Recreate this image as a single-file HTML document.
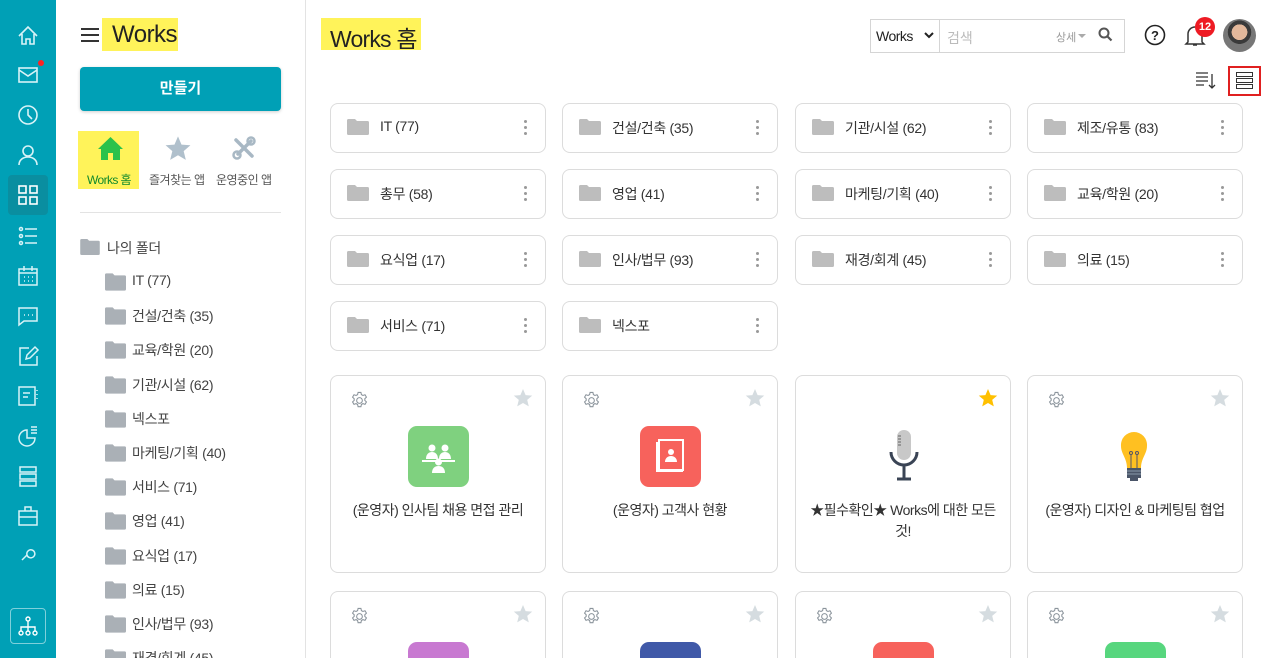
<!DOCTYPE html><html><head><meta charset="utf-8"><style>
*{box-sizing:border-box;margin:0;padding:0}
html,body{width:1282px;height:658px;overflow:hidden}
body{background:#fff;font-family:"Liberation Sans","Noto Sans CJK KR",sans-serif;color:#333;position:relative}
#wrap{position:absolute;left:0;top:0;width:1282px;height:658px;overflow:hidden}
.a{position:absolute}
.rail{left:0;top:0;width:56px;height:658px;background:#00a0b6}
.ri{position:absolute;left:16px;width:24px;height:24px}
.side{left:56px;top:0;width:250px;height:658px;border-right:1px solid #e3e3e3}
.ft{position:absolute;font-size:14px;color:#444;white-space:nowrap;letter-spacing:-.3px}
.fc{position:absolute;width:216px;height:50px;border:1px solid #dcdcdc;border-radius:8px;background:#fff}
.fc .fi{position:absolute;left:16px;top:15px}
.fc span{position:absolute;left:49px;top:14px;font-size:14px;color:#333;letter-spacing:-.3px}
.fc .d{position:absolute;right:18px;top:16px;width:3px}
.fc .d i{display:block;width:3px;height:3px;background:#999;border-radius:50%;margin-bottom:3px}
.ac{position:absolute;width:216px;height:198px;border:1px solid #dcdcdc;border-radius:8px;background:#fff;overflow:hidden}
.ac .g{position:absolute;left:19px;top:15px}
.ac .s{position:absolute;right:12px;top:12px}
.ac .ic{position:absolute;left:77px;top:50px;width:61px;height:61px;border-radius:9px}
.ac .t{position:absolute;left:8px;right:8px;top:124px;text-align:center;font-size:14px;line-height:21px;color:#333;letter-spacing:-.5px}
</style></head><body><div id="wrap">
<svg width="0" height="0" style="position:absolute"><defs>
<symbol id="fold" viewBox="0 0 22 16"><path d="M0 1.5Q0 0 1.5 0H8l2 2h10.5Q22 2 22 3.5V14.5Q22 16 20.5 16H1.5Q0 16 0 14.5Z" fill="#bdbdbd"/></symbol>
<symbol id="foldb" viewBox="0 0 22 18"><path d="M0 1.5Q0 0 1.5 0H8l2 2h10.5Q22 2 22 3.5V16.5Q22 18 20.5 18H1.5Q0 18 0 16.5Z" fill="#aab0b6"/></symbol>
<symbol id="gear" viewBox="0 0 20 20"><g fill="none" stroke="#8a939b" stroke-width="1.1"><circle cx="10" cy="10" r="3"/><path d="M8.5 1.5h3l.5 2.3 1.6.9 2.2-.8 1.5 2.6-1.7 1.6v1.8l1.7 1.6-1.5 2.6-2.2-.8-1.6.9-.5 2.3h-3l-.5-2.3-1.6-.9-2.2.8-1.5-2.6 1.7-1.6V8.1L2.7 6.5l1.5-2.6 2.2.8 1.6-.9z"/></g></symbol>
<symbol id="star" viewBox="0 0 20 20"><path d="M10 1l2.6 6.1 6.6.5-5 4.3 1.6 6.5L10 15l-5.8 3.4 1.6-6.5-5-4.3 6.6-.5z"/></symbol>
</defs></svg>

<div class="a rail">
<svg class="ri" style="top:24px" viewBox="0 0 24 24" fill="none" stroke="#d8f3f7" stroke-width="1.6"><path d="M3 12L12 3l9 9M6 10v10h4v-5h4v5h4V10"/></svg>
<svg class="ri" style="top:63px" viewBox="0 0 24 24" fill="none" stroke="#d8f3f7" stroke-width="1.6"><rect x="3" y="5" width="18" height="14"/><path d="M3 7l9 6 9-6"/></svg>
<div class="a" style="left:38px;top:60px;width:6px;height:6px;border-radius:50%;background:#f22"></div>
<svg class="ri" style="top:103px" viewBox="0 0 24 24" fill="none" stroke="#d8f3f7" stroke-width="1.6"><circle cx="12" cy="12" r="9"/><path d="M12 6v6l4 4"/></svg>
<svg class="ri" style="top:143px" viewBox="0 0 24 24" fill="none" stroke="#d8f3f7" stroke-width="1.6"><circle cx="12" cy="8" r="5"/><path d="M3 22c0-5 4-8 9-8s9 3 9 8"/></svg>
<div class="a" style="left:8px;top:175px;width:40px;height:40px;background:#0a8ea0;border-radius:4px"></div>
<svg class="ri" style="top:183px" viewBox="0 0 24 24" fill="none" stroke="#fff" stroke-width="1.6"><rect x="3" y="3" width="7" height="7"/><rect x="14" y="3" width="7" height="7"/><rect x="3" y="14" width="7" height="7"/><rect x="14" y="14" width="7" height="7"/></svg>
<svg class="ri" style="top:224px" viewBox="0 0 24 24" fill="none" stroke="#d8f3f7" stroke-width="1.5"><circle cx="5" cy="5" r="1.5"/><circle cx="5" cy="12" r="1.5"/><circle cx="5" cy="19" r="1.5"/><path d="M9 5h12M9 12h12M9 19h12"/></svg>
<svg class="ri" style="top:264px" viewBox="0 0 24 24" fill="none" stroke="#d8f3f7" stroke-width="1.5"><rect x="3" y="5" width="18" height="16"/><path d="M8 2v5M16 2v5M3 9h18M8 13h1M12 13h1M16 13h1M8 17h1M12 17h1M16 17h1"/></svg>
<svg class="ri" style="top:304px" viewBox="0 0 24 24" fill="none" stroke="#d8f3f7" stroke-width="1.5"><path d="M3 4h18v13H8l-5 4z"/><path d="M8 11h1M12 11h1M16 11h1"/></svg>
<svg class="ri" style="top:344px" viewBox="0 0 24 24" fill="none" stroke="#d8f3f7" stroke-width="1.5"><path d="M13 4H4v17h17v-9"/><path d="M10 15l1-4 8-8 3 3-8 8z"/></svg>
<svg class="ri" style="top:384px" viewBox="0 0 24 24" fill="none" stroke="#d8f3f7" stroke-width="1.5"><rect x="3" y="3" width="16" height="18"/><path d="M7 9h7M7 13h5M21 6v1M21 10v1M21 14v1"/></svg>
<svg class="ri" style="top:424px" viewBox="0 0 24 24" fill="none" stroke="#d8f3f7" stroke-width="1.5"><path d="M11 6a8 8 0 1 0 8 8h-8z"/><path d="M15 3h6M15 6h6M15 9h6"/></svg>
<svg class="ri" style="top:464px" viewBox="0 0 24 24" fill="none" stroke="#d8f3f7" stroke-width="1.5"><rect x="4" y="3" width="16" height="5"/><rect x="4" y="10" width="16" height="5"/><rect x="4" y="17" width="16" height="5"/></svg>
<svg class="ri" style="top:504px" viewBox="0 0 24 24" fill="none" stroke="#d8f3f7" stroke-width="1.5"><rect x="3" y="7" width="18" height="14"/><path d="M9 7V3h6v4M3 13h18"/></svg>
<svg class="ri" style="top:542px" viewBox="0 0 24 24" fill="none" stroke="#d8f3f7" stroke-width="1.5"><path d="M6 18l5-5M11 13a4 4 0 1 0 5-5 4 4 0 0 0-5 5z"/></svg>
<div class="a" style="left:10px;top:608px;width:36px;height:36px;border:1px solid #7fd0db;border-radius:4px"></div>
<svg class="ri" style="top:614px" viewBox="0 0 24 24" fill="none" stroke="#fff" stroke-width="1.4"><circle cx="12" cy="5" r="2"/><circle cx="5" cy="19" r="2"/><circle cx="12" cy="19" r="2"/><circle cx="19" cy="19" r="2"/><path d="M12 7v10M5 17v-4h14v4"/></svg>
</div>

<div class="a side">
<div class="a" style="left:25px;top:28px;width:18px;height:2px;background:#333;box-shadow:0 6px 0 #333,0 12px 0 #333"></div>
<div class="a" style="left:46px;top:18px;width:76px;height:33px;background:#fff35a"></div>
<div class="a" style="left:56px;top:21px;font-size:24px;color:#222;letter-spacing:-.5px">Works</div>
<div class="a" style="left:24px;top:67px;width:201px;height:44px;background:#00a0b6;border-radius:4px;box-shadow:0 1px 3px rgba(0,0,0,.2);color:#fff;font-size:15px;font-weight:bold;text-align:center;line-height:44px">만들기</div>
<div class="a" style="left:22px;top:131px;width:61px;height:58px;background:#fff35a"></div>
<svg class="a" style="left:41px;top:136px" width="27" height="25" viewBox="0 0 27 25"><path d="M13.5 1L1 13h3v11h7v-7h5v7h7V13h3z" fill="#2bc24b"/></svg>
<div class="a" style="left:31px;top:171px;font-size:12px;color:#118a2c;letter-spacing:-.6px">Works 홈</div>
<svg class="a" style="left:108px;top:135px" width="28" height="27"><use href="#star" fill="#b0c0cc" width="28" height="27"/></svg>
<div class="a" style="left:93px;top:171px;font-size:12px;color:#555;letter-spacing:-.5px">즐겨찾는 앱</div>
<svg class="a" style="left:175px;top:135px" width="26" height="26" viewBox="0 0 26 26" fill="none" stroke="#a8b8c4" stroke-linecap="round"><path d="M5 5l16 16" stroke-width="3.5"/><path d="M20 6L7 19" stroke-width="3.5"/><circle cx="20" cy="6" r="3.5" stroke-width="2.5"/><circle cx="6" cy="20" r="3.5" stroke-width="2.5"/></svg>
<div class="a" style="left:160px;top:171px;font-size:12px;color:#555;letter-spacing:-.5px">운영중인 앱</div>
<div class="a" style="left:24px;top:212px;width:201px;height:1px;background:#e3e3e3"></div>
<svg class="a" style="left:24px;top:239px" width="20" height="16"><use href="#foldb" width="20" height="16"/></svg>
<div class="ft" style="left:51px;top:238px">나의 폴더</div>
</div>
<div id="tree"></div>

<div class="a" style="left:321px;top:18px;width:100px;height:32px;background:#fff35a"></div>
<div class="a" style="left:330px;top:20px;font-size:23px;color:#222;letter-spacing:-.8px">Works 홈</div>

<div class="a" style="left:870px;top:19px;width:255px;height:34px;border:1px solid #d5d5d5"></div>
<div class="a" style="left:939px;top:20px;width:1px;height:32px;background:#d5d5d5"></div>
<div class="a" style="left:876px;top:28px;font-size:14px;color:#222;letter-spacing:-.5px">Works</div>
<svg class="a" style="left:924px;top:31px" width="10" height="8" viewBox="0 0 10 8"><path d="M1 2l4 4 4-4" stroke="#222" stroke-width="2" fill="none"/></svg>
<div class="a" style="left:947px;top:28px;font-size:14px;color:#bbb">검색</div>
<div class="a" style="left:1056px;top:29px;font-size:11px;color:#999">상세</div>
<div class="a" style="left:1078px;top:34px;border:4px solid transparent;border-top-color:#aaa"></div>
<svg class="a" style="left:1098px;top:27px" width="15" height="15" viewBox="0 0 15 15"><circle cx="6" cy="6" r="4.5" stroke="#555" stroke-width="2" fill="none"/><path d="M9.5 9.5l4 4" stroke="#555" stroke-width="2.2"/></svg>
<svg class="a" style="left:1144px;top:24px" width="22" height="22" viewBox="0 0 22 22"><circle cx="11" cy="11" r="9.5" stroke="#222" stroke-width="1.6" fill="none"/><text x="11" y="16" font-size="13" font-weight="bold" text-anchor="middle" fill="#222" font-family="Liberation Sans">?</text></svg>
<svg class="a" style="left:1184px;top:24px" width="22" height="24" viewBox="0 0 22 24"><path d="M4 18V10a7 7 0 0 1 14 0v8l2 2H2z M9 21h4" stroke="#333" stroke-width="1.5" fill="none"/></svg>
<div class="a" style="left:1195px;top:17px;width:20px;height:20px;border-radius:50%;background:#ee1b24;color:#fff;font-size:11px;font-weight:bold;text-align:center;line-height:20px">12</div>
<div class="a" style="left:1223px;top:19px;width:33px;height:33px;border-radius:50%;background:radial-gradient(circle at 50% 40%,#e3b89b 0 30%,#3a3a3a 31% 45%,#777 46%)"></div>
<svg class="a" style="left:1195px;top:70px" width="22" height="20" viewBox="0 0 22 20" stroke="#333" stroke-width="1.3" fill="none"><path d="M1 3h12M1 7h12M1 11h12M1 15h8M17 4v14M14 15l3 3 3-3"/></svg>
<div class="a" style="left:1228px;top:66px;width:33px;height:30px;border:2px solid #e02020"></div>
<div class="a" style="left:1236px;top:72px;width:17px;height:5px;border:1.3px solid #333"></div>
<div class="a" style="left:1236px;top:78px;width:17px;height:5px;border:1.3px solid #333"></div>
<div class="a" style="left:1236px;top:84px;width:17px;height:5px;border:1.3px solid #333"></div>

<div id="main"></div>
</div>
<script>
var tr=["IT (77)","건설/건축 (35)","교육/학원 (20)","기관/시설 (62)","넥스포","마케팅/기획 (40)","서비스 (71)","영업 (41)","요식업 (17)","의료 (15)","인사/법무 (93)","재경/회계 (45)"];
var h="";tr.forEach(function(t,i){var y=273+i*34.2;h+='<svg class="a" style="left:105px;top:'+y+'px" width="21" height="18"><use href="#foldb" width="21" height="18"/></svg><div class="ft" style="left:132px;top:'+(y-1)+'px;'+(i==11?'height:'+(658-y+1)+'px;overflow:hidden':'')+'">'+t+'</div>';});
document.getElementById("tree").innerHTML=h;
var f=[["IT (77)","건설/건축 (35)","기관/시설 (62)","제조/유통 (83)"],["총무 (58)","영업 (41)","마케팅/기획 (40)","교육/학원 (20)"],["요식업 (17)","인사/법무 (93)","재경/회계 (45)","의료 (15)"],["서비스 (71)","넥스포"]];
var X=[330,562,795,1027];h="";
f.forEach(function(r,ri){r.forEach(function(t,ci){h+='<div class="fc" style="left:'+X[ci]+'px;top:'+(103+ri*66)+'px"><svg class="fi" width="22" height="16"><use href="#fold" width="22" height="16"/></svg><span>'+t+'</span><div class="d"><i></i><i></i><i></i></div></div>';});});
var ic=[
'<div class="ic" style="background:#7fd17f"><svg width="61" height="61" viewBox="0 0 61 61" fill="#fff"><circle cx="24" cy="22" r="3.5"/><circle cx="37" cy="22" r="3.5"/><path d="M18 33c0-5 3-7 6-7s6 2 6 7zM31 33c0-5 3-7 6-7s6 2 6 7z"/><rect x="14" y="34" width="33" height="2"/><circle cx="30.5" cy="36" r="3.5"/><path d="M24 47c0-5 3-7 6.5-7s6.5 2 6.5 7z"/></svg></div>',
'<div class="ic" style="background:#f7625c"><svg width="61" height="61" viewBox="0 0 61 61"><rect x="16" y="16" width="27" height="30" fill="#fff"/><rect x="19" y="14" width="24" height="30" fill="#f7625c" stroke="#fff" stroke-width="2"/><circle cx="31" cy="26" r="3" fill="#fff"/><path d="M25 36c0-4 3-6 6-6s6 2 6 6z" fill="#fff"/></svg></div>',
'<svg style="position:absolute;left:90px;top:52px" width="36" height="58" viewBox="0 0 36 58"><rect x="11" y="2" width="14" height="30" rx="7" fill="#c8c8c8"/><path d="M12 8h3M12 11h3M12 14h3M12 17h3" stroke="#777" stroke-width="1.2"/><path d="M5 24a13 13 0 0 0 26 0M18 37v14M11 51h14" stroke="#3a4455" stroke-width="3" fill="none"/></svg>',
'<svg style="position:absolute;left:86px;top:54px" width="40" height="56" viewBox="0 0 40 56"><path d="M20 2a13 13 0 0 0-13 14c0 8 6 12 6 22h14c0-10 6-14 6-22A13 13 0 0 0 20 2z" fill="#ffc021"/><path d="M17 38V24M23 38V24" stroke="#556" stroke-width="1"/><circle cx="17" cy="23" r="1.5" stroke="#556" fill="none"/><circle cx="23" cy="23" r="1.5" stroke="#556" fill="none"/><rect x="13" y="38" width="14" height="10" fill="#4a5568"/><path d="M13 41h14M13 44h14" stroke="#8899aa"/><rect x="16" y="48" width="8" height="3" fill="#4a5568"/></svg>'];
var tt=["(운영자) 인사팀 채용 면접 관리","(운영자) 고객사 현황","★필수확인★ Works에 대한 모든 것!","(운영자) 디자인 &amp; 마케팅팀 협업"];
for(var i=0;i<4;i++){h+='<div class="ac" style="left:'+X[i]+'px;top:375px">'+(i!=2?'<svg class="g" width="19" height="19"><use href="#gear" width="19" height="19"/></svg>':'')+'<svg class="s" width="20" height="20"><use href="#star" fill="'+(i==2?'#ffc000':'#d5dce0')+'" width="20" height="20"/></svg>'+ic[i]+'<div class="t"'+(i==2?' style="left:10px;right:10px"':'')+'>'+tt[i]+'</div></div>';}
var c2=["#c879d1","#4059a8","#f7625c","#57d67e"];
for(var i=0;i<4;i++){h+='<div class="ac" style="left:'+X[i]+'px;top:591px;height:67px;border-bottom:none;border-radius:8px 8px 0 0"><svg class="g" width="19" height="19"><use href="#gear" width="19" height="19"/></svg><svg class="s" width="20" height="20"><use href="#star" fill="#d5dce0" width="20" height="20"/></svg><div class="ic" style="background:'+c2[i]+';height:17px;border-radius:9px 9px 0 0"></div></div>';}
document.getElementById("main").innerHTML=h;
</script>
</body></html>
